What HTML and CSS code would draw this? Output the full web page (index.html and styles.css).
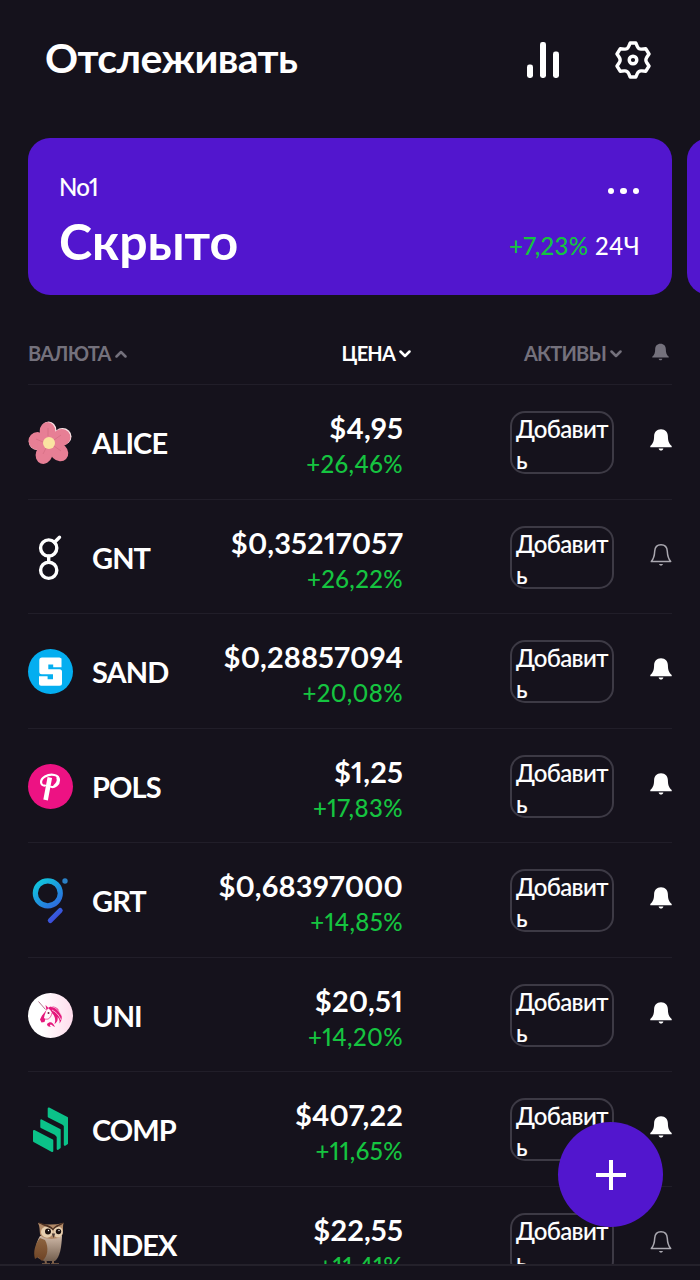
FILE: index.html
```html
<!DOCTYPE html>
<html lang="ru">
<head>
  <meta charset="utf-8">
  <title>Отслеживать</title>
  <link rel="stylesheet" href="styles.css">
</head>
<body>
  <!-- shared icons -->
  <svg class="sprite">
    <symbol id="bell" viewBox="0 0 22 22">
      <path d="M11 0.2C6.6 0.2 4.2 3.1 4.1 7.3C4 11.8 3.4 14.2 0.3 17V18.2H21.7V17C18.6 14.2 18 11.8 17.9 7.3C17.8 3.1 15.4 0.2 11 0.2Z" fill="currentColor"/>
      <path d="M8.6 19.6H13.4C13 21 12.2 21.6 11 21.6S9 21 8.6 19.6Z" fill="currentColor"/>
    </symbol>
    <symbol id="bell-off" viewBox="0 0 22 22">
      <path d="M11 0.8C7.2 0.8 4.9 3.5 4.7 7.3C4.5 12 4 14.5 1.3 17.6H20.7C18 14.5 17.5 12 17.3 7.3C17.1 3.5 14.8 0.8 11 0.8Z" fill="none" stroke="currentColor" stroke-width="1.5" stroke-linejoin="round"/>
      <path d="M9 20H13C12.5 21.3 11.9 21.7 11 21.7S9.5 21.3 9 20Z" fill="currentColor"/>
    </symbol>
    <symbol id="chevron" viewBox="0 0 12 8">
      <path d="M1.5 1.5L6 6L10.5 1.5" fill="none" stroke="currentColor" stroke-width="2.5" stroke-linecap="round" stroke-linejoin="round"/>
    </symbol>
  </svg>

  <header class="header">
    <h1 class="title">Отслеживать</h1>
    <svg class="chart-icon" viewBox="0 0 32 36" fill="#fff">
      <rect x="0" y="22.5" width="6" height="13.5" rx="2.4"/>
      <rect x="13" y="0" width="6" height="36" rx="2.4"/>
      <rect x="26" y="9.5" width="6" height="26.5" rx="2.4"/>
    </svg>
    <svg class="gear-icon" viewBox="0 0 36 38" fill="none" stroke="#fff" stroke-width="3.4" stroke-linejoin="round">
      <path d="M15.2 2H20.8L22.4 5.6C23.2 7.4 24.6 8.3 26.6 8.1L30.7 7.7L34 13L31.8 16.2C30.6 18 30.6 20 31.8 21.8L34 25L30.7 30.3L26.6 29.9C24.6 29.7 23.2 30.6 22.4 32.4L20.8 36H15.2L13.6 32.4C12.8 30.6 11.4 29.7 9.4 29.9L5.3 30.3L2 25L4.2 21.8C5.4 20 5.4 18 4.2 16.2L2 13L5.3 7.7L9.4 8.1C11.4 8.3 12.8 7.4 13.6 5.6Z"/>
      <circle cx="18" cy="19" r="3.8"/>
    </svg>
  </header>

  <section class="cards">
    <div class="card">
      <div class="card-row">
        <span class="card-name">No1</span>
        <span class="dots"><i></i><i></i><i></i></span>
      </div>
      <div class="card-row card-bottom">
        <span class="card-value">Скрыто</span>
        <span class="card-change"><span class="green">+7,23%</span> 24Ч</span>
      </div>
    </div>
    <div class="card"></div>
  </section>

  <div class="list-head">
    <div class="col-name">ВАЛЮТА<svg class="chevron up"><use href="#chevron"/></svg></div>
    <div class="col-price">ЦЕНА<svg class="chevron"><use href="#chevron"/></svg></div>
    <div class="col-assets">АКТИВЫ<svg class="chevron"><use href="#chevron"/></svg></div>
    <svg class="head-bell"><use href="#bell"/></svg>
  </div>

  <main class="list">
    <div class="row">
      <svg class="coin" viewBox="0 0 45 45">
        <g fill="#fbe6e8">
          <ellipse cx="20.6" cy="10.2" rx="7.8" ry="8.8"/>
          <ellipse cx="34.5" cy="16.5" rx="9" ry="8.5"/>
          <ellipse cx="8.8" cy="21.5" rx="8" ry="8.5"/>
        </g>
        <g fill="#e77f95">
          <ellipse cx="19.5" cy="11" rx="7.8" ry="9"/>
          <ellipse cx="33.5" cy="17.5" rx="9" ry="8.5" transform="rotate(-20 33.5 17.5)"/>
          <ellipse cx="31" cy="32" rx="10" ry="8.5" transform="rotate(45 31 32)"/>
          <ellipse cx="16" cy="34.5" rx="8.3" ry="9.5" transform="rotate(20 16 34.5)"/>
          <ellipse cx="9.5" cy="21" rx="9" ry="9"/>
          <circle cx="21" cy="23" r="12"/>
        </g>
        <path d="M20 16V8M26 20L33 15M26 26L33 31M18 28L15 34M15 22L8 19" stroke="#d46f84" stroke-width="0.8"/>
        <circle cx="21" cy="23" r="6" fill="#fae3a1"/>
      </svg>
      <div class="name">ALICE</div>
      <div class="price"><b>$4,95</b><span class="green">+26,46%</span></div>
      <button class="add">Добавить</button>
      <svg class="bell"><use href="#bell"/></svg>
    </div>

    <div class="row">
      <svg class="coin" viewBox="0 0 45 45" fill="none" stroke="#fff" stroke-width="3.4">
        <circle cx="20.7" cy="13" r="8.1"/>
        <circle cx="20.7" cy="35.3" r="8.1"/>
        <path d="M20.7 21V27M26.5 7.3L31.5 2.3" stroke-linecap="round"/>
      </svg>
      <div class="name">GNT</div>
      <div class="price"><b>$0,35217057</b><span class="green">+26,22%</span></div>
      <button class="add">Добавить</button>
      <svg class="bell off"><use href="#bell-off"/></svg>
    </div>

    <div class="row">
      <svg class="coin" viewBox="0 0 45 45">
        <circle cx="22.5" cy="22.5" r="22.5" fill="#04aef0"/>
        <path d="M14 8.500H31.500L33.500 9.500V18.300H25.200V15.500H20.300V20.300H31.500Q34 20.300 34 22.800V34.200Q34 36.700 31.500 36.700H13Q11 36.700 11 34.700V27.300H19.600V30.200H25V25.300H13.800Q11.300 25.300 11.300 22.800V11.200Q11.300 8.500 14 8.500Z" fill="#fff"/>
      </svg>
      <div class="name">SAND</div>
      <div class="price"><b>$0,28857094</b><span class="green">+20,08%</span></div>
      <button class="add">Добавить</button>
      <svg class="bell"><use href="#bell"/></svg>
    </div>

    <div class="row">
      <svg class="coin" viewBox="0 0 45 45" fill="none" stroke="#fff">
        <circle cx="22.5" cy="22.5" r="22.5" fill="#ed1283" stroke="none"/>
        <path d="M17 21.5C12 22 11.5 15.5 17 12.500C23 9.300 31 10.500 31 16C31 20.500 27 24 23 22.800" stroke-width="2.2" stroke-linecap="round"/>
        <path d="M29.500 13C31 17 28.500 20.500 26 22.500" stroke-width="2.6"/>
        <path d="M21.800 13.500L17.600 36" stroke-width="4.6"/>
      </svg>
      <div class="name">POLS</div>
      <div class="price"><b>$1,25</b><span class="green">+17,83%</span></div>
      <button class="add">Добавить</button>
      <svg class="bell"><use href="#bell"/></svg>
    </div>

    <div class="row">
      <svg class="coin" viewBox="0 0 45 45" fill="none">
        <defs>
          <linearGradient id="grt" gradientUnits="userSpaceOnUse" x1="6" y1="5" x2="34" y2="42">
            <stop offset="0" stop-color="#10c8dc"/>
            <stop offset="0.5" stop-color="#2386de"/>
            <stop offset="1" stop-color="#4340dc"/>
          </linearGradient>
        </defs>
        <circle cx="19.8" cy="15.3" r="12.5" stroke="url(#grt)" stroke-width="5.2"/>
        <circle cx="37" cy="3" r="2.7" fill="#2a7fc4"/>
        <path d="M32.2 32.5L22.3 42.5" stroke="url(#grt)" stroke-width="5" stroke-linecap="round"/>
      </svg>
      <div class="name">GRT</div>
      <div class="price"><b>$0,68397000</b><span class="green">+14,85%</span></div>
      <button class="add">Добавить</button>
      <svg class="bell"><use href="#bell"/></svg>
    </div>

    <div class="row">
      <svg class="coin" viewBox="0 0 45 45">
        <defs>
          <linearGradient id="uni"><stop offset="0.3" stop-color="#fff"/><stop offset="1" stop-color="#ffdcec"/></linearGradient>
        </defs>
        <circle cx="22.5" cy="22.5" r="22.5" fill="url(#uni)"/>
        <path d="M10.5 8.5L17.5 16.5" stroke="#9c5070" stroke-width="0.8"/>
        <path d="M17.5 12L20.5 15L18.5 17.5Z" fill="#e5187c"/>
        <path d="M20 15C25 11.5 31 15 31.5 19C34.5 22 34.5 27 31.5 30.5C32 27 31 25.5 29.5 24C30.5 28 28 30 26.5 31C28 27 27 23 24 20C23 18 22 16.5 20 15Z" fill="#e5187c"/>
        <path d="M23 13.5C28 14 31.5 18.5 33.5 22.5M24 17C28 19 31 22 33 27" fill="none" stroke="#fff" stroke-width="0.7"/>
        <path d="M18.5 17L14 22.5L12 26.5L13.5 29.5L16.5 29L17.5 26L16 25L16.5 22.5Z" fill="#e5187c"/>
        <path d="M17.5 26C21 27 23 24 24 20" fill="none" stroke="#e5187c" stroke-width="0.7"/>
        <circle cx="20.5" cy="20" r="1" fill="#702040"/>
        <path d="M19 31C22 28 25 29 27 34C24.5 33 24 31.5 22.5 31.5Q21 33 23.5 33.5C20.5 34 19 33 19 31Z" fill="#e5187c"/>
      </svg>
      <div class="name">UNI</div>
      <div class="price"><b>$20,51</b><span class="green">+14,20%</span></div>
      <button class="add">Добавить</button>
      <svg class="bell"><use href="#bell"/></svg>
    </div>

    <div class="row">
      <svg class="coin" viewBox="0 0 45 45" fill="#0bc289" stroke="#0bc289" stroke-width="2" stroke-linejoin="round">
        <path d="M20.7 1.5L39 10.800V36.500L36.800 37.800V18.500L34.500 16.500L20.700 9.500Z"/>
        <path d="M13.300 13.300L31.700 22.800V40.500L29.700 42V29.500L27.500 27L13.300 20Z"/>
        <path d="M6 24L24.300 33.500V44L6 34Z"/>
      </svg>
      <div class="name">COMP</div>
      <div class="price"><b>$407,22</b><span class="green">+11,65%</span></div>
      <button class="add">Добавить</button>
      <svg class="bell"><use href="#bell"/></svg>
    </div>

    <div class="row">
      <svg class="coin" viewBox="0 0 45 45">
        <defs>
          <linearGradient id="belly" x2="0" y2="1"><stop offset="0" stop-color="#cdb7a6"/><stop offset="1" stop-color="#75604f"/></linearGradient>
          <linearGradient id="wing" x2="0" y2="1"><stop offset="0" stop-color="#8d6440"/><stop offset="1" stop-color="#6e4325"/></linearGradient>
        </defs>
        <path d="M17 36L18 41.500M25 36V41.500" stroke="#80614a" stroke-width="2"/>
        <path d="M14 42H22M23 42H31" stroke="#80614a" stroke-width="1.5"/>
        <path d="M12 14C7 22 6 32 10 36L16 39H27C32 35 33.500 25 34 14Z" fill="url(#belly)"/>
        <path d="M12 16C7 22 5 30 7 37L10 35L14 39C20 35 21 25 17 18Z" fill="url(#wing)"/>
        <path d="M10 1C18 3 27 3 35.500 1C34.500 5 35.500 8 34.500 12C33 18.500 14 18.500 12 12C11.500 8 12 5 10 1Z" fill="#b18967"/>
        <ellipse cx="19" cy="10" rx="6" ry="5.8" fill="#e6cfb0"/>
        <ellipse cx="30" cy="10" rx="4.8" ry="5.5" fill="#e6cfb0"/>
        <path d="M10 0C16 2.500 21 2 25 6.500C28 2.500 32 2.500 36 0C34 4 28 4 25 8.500C21 4 14 4.500 10 0Z" fill="#4c3022"/>
        <circle cx="20" cy="9.5" r="3" fill="#1b1110"/>
        <circle cx="30.5" cy="9.5" r="2.7" fill="#1b1110"/>
        <circle cx="20.5" cy="8.5" r="0.7" fill="#fff"/>
        <circle cx="31" cy="8.5" r="0.7" fill="#fff"/>
        <path d="M23.800 11.500H27.200L25.500 16Z" fill="#4a3a35"/>
      </svg>
      <div class="name">INDEX</div>
      <div class="price"><b>$22,55</b><span class="green">+11,41%</span></div>
      <button class="add">Добавить</button>
      <svg class="bell off"><use href="#bell-off"/></svg>
    </div>
  </main>

  <button class="fab">
    <svg viewBox="0 0 30 30"><path d="M15 0V30M0 15H30" stroke="#fff" stroke-width="4"/></svg>
  </button>
</body>
</html>
```
FILE: styles.css
```css
* {
  box-sizing: border-box;
}

body {
  margin: 0;
  height: 1280px;
  overflow: hidden;
  position: relative;
  background-color: #15121c;
  color: #fff;
  font-family: Lato, "Open Sans", sans-serif;
  font-variant-numeric: proportional-nums;
}

.sprite {
  display: none;
}

.green {
  color: #15c440;
}

.header {
  display: flex;
  align-items: center;
  height: 138px;
  padding: 0 49px 18px 45px;
}

.title {
  flex: 1;
  margin: 0;
  padding-bottom: 6px;
  font-size: 41px;
  font-weight: 700;
  letter-spacing: -0.6px;
}

.chart-icon {
  width: 32px;
  height: 36px;
  margin-right: 56px;
}

.gear-icon {
  width: 36px;
  height: 38px;
}

.cards {
  display: flex;
  gap: 15px;
  padding-left: 28px;
  overflow: hidden;
}

.card {
  flex: none;
  width: 644px;
  height: 157px;
  padding: 33px 32px 0 31px;
  border-radius: 22px;
  background-color: #5216ce;
}

.card-row {
  display: flex;
  justify-content: space-between;
  align-items: center;
  height: 30px;
}

.card-bottom {
  height: 80px;
}

.card-name {
  font-size: 24px;
  font-weight: 500;
  letter-spacing: -0.8px;
  -webkit-text-stroke: 0.1px;
}

.dots {
  display: flex;
  gap: 6px;
  padding: 10px 1px 0 0;
}

.dots i {
  width: 6.5px;
  height: 6.5px;
  border-radius: 50%;
  background-color: #fff;
}

.card-value {
  font-size: 50px;
  font-weight: 700;
}

.card-change {
  padding-top: 9px;
  font-size: 24px;
  font-weight: 500;
  letter-spacing: 0.4px;
}

.list-head {
  display: grid;
  grid-template-columns: 174px 210px 211px 49px;
  align-items: center;
  height: 90px;
  margin: 0 28px;
  padding-top: 27px;
  border-bottom: 1px solid #211e29;
  color: #74717c;
  font-size: 20px;
  font-weight: 700;
  letter-spacing: -0.8px;
}

.col-price {
  padding-right: 1px;
  color: #fff;
  text-align: right;
}

.col-assets {
  padding-right: 1px;
  text-align: right;
}

.chevron {
  width: 12px;
  height: 8px;
  margin-left: 4px;
  vertical-align: 3px;
}

.up {
  transform: rotate(180deg);
}

.head-bell {
  width: 17px;
  height: 18px;
  margin: -3px 3px 0 0;
  justify-self: end;
}

.list {
  height: 881px;
  overflow: hidden;
  border-bottom: 2px solid #24212b;
}

.row {
  display: grid;
  grid-template-columns: 64px 110px 201px 211px 58px;
  align-items: center;
  height: 114.5px;
  margin: 0 28px;
  padding-top: 2px;
  border-bottom: 1px solid #211e29;
}

.coin {
  width: 45px;
  height: 45px;
  overflow: visible;
}

.name {
  font-size: 29px;
  font-weight: 700;
  letter-spacing: -0.9px;
}

.price {
  padding-top: 7px;
  text-align: right;
  white-space: nowrap;
}

.price b {
  display: block;
  font-size: 29px;
  line-height: 36px;
  letter-spacing: 0.15px;
}

.price span {
  display: block;
  font-size: 24px;
  font-weight: 500;
  line-height: 36px;
  letter-spacing: 0.4px;
}

.add {
  width: 104px;
  height: 63px;
  padding: 0 0 3px 4px;
  justify-self: end;
  border: 2px solid #3d3a45;
  border-radius: 15px;
  background: none;
  color: #fff;
  font-family: inherit;
  font-size: 24px;
  font-weight: 500;
  line-height: 31px;
  letter-spacing: -0.6px;
  text-align: left;
  word-break: break-all;
  -webkit-text-stroke: 0.1px;
}

.bell {
  width: 22px;
  height: 22px;
  margin-bottom: 5px;
  justify-self: end;
}

.off {
  color: #aaa8b0;
}

.fab {
  position: absolute;
  top: 1122px;
  left: 558px;
  display: flex;
  justify-content: center;
  align-items: center;
  width: 105px;
  height: 105px;
  padding: 0;
  border: none;
  border-radius: 50%;
  background-color: #5216ce;
}

.fab svg {
  width: 30px;
  height: 30px;
}
```
